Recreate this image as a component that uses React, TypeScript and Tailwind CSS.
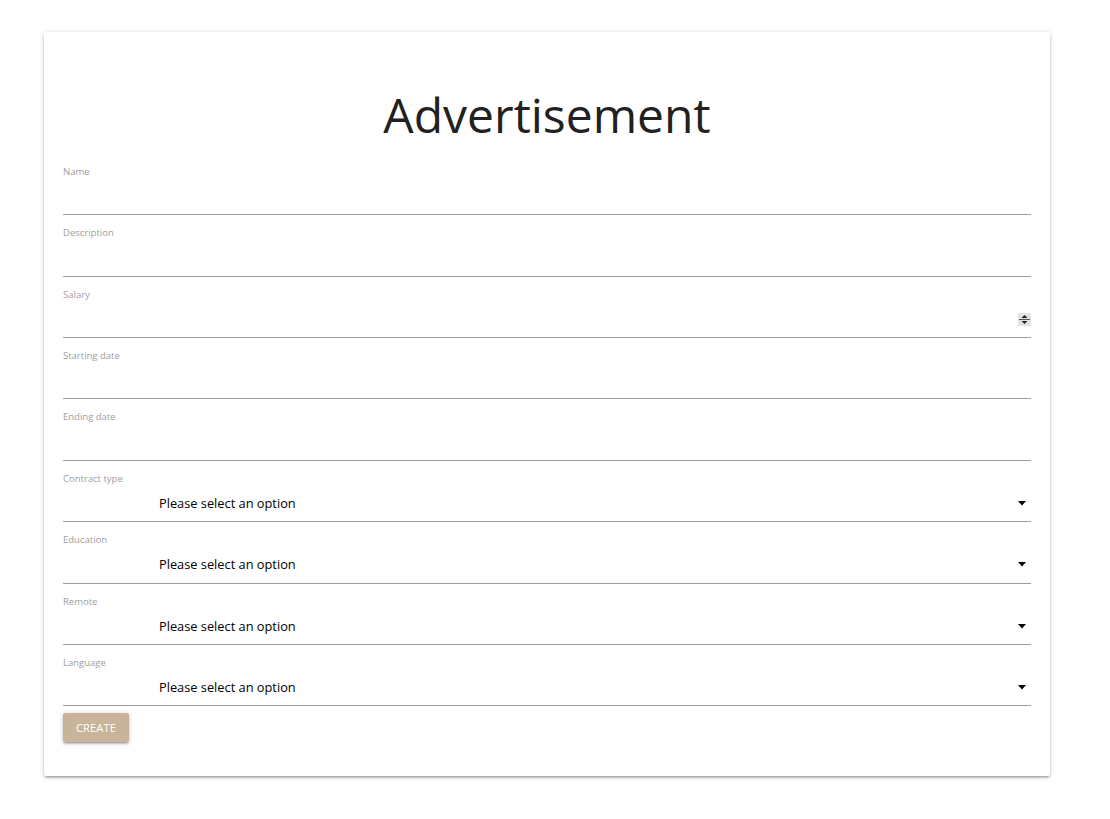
import React from "react";

const font = { fontFamily: '"Open Sans", "Noto Sans", sans-serif' };

function Caret() {
  return (
    <svg width="8" height="5" viewBox="0 0 8 5" className="absolute right-[5px] top-[40px]">
      <path d="M0 0 L8 0 L4 4.5 Z" fill="#000" />
    </svg>
  );
}

function Spinner() {
  return (
    <div className="absolute right-0 top-[36px] flex h-[13px] w-[13px] flex-col bg-[#e3e3e3]">
      <svg width="13" height="13" viewBox="0 0 13 13">
        <path d="M3.5 5 L9.5 5 L6.5 2 Z" fill="#222" />
        <rect x="1" y="6" width="11" height="1" fill="#555" />
        <path d="M3.5 8 L9.5 8 L6.5 11 Z" fill="#222" />
      </svg>
    </div>
  );
}

function Field({ label, kind }: { label: string; kind?: "select" | "number" }) {
  return (
    <div className="relative h-[61.4px] border-b border-[#9e9e9e] pt-[13px]">
      <div className="text-[9.5px] leading-[10px] text-[#9e9e9e]">{label}</div>
      {kind === "select" && (
        <>
          <div className="absolute left-[96px] top-[32px] text-[12.8px] leading-[20px] text-black">
            Please select an option
          </div>
          <Caret />
        </>
      )}
      {kind === "number" && <Spinner />}
    </div>
  );
}

export default function App() {
  return (
    <div className="min-h-[819px] w-[1110px] bg-white pt-[32px]" style={font}>
      <div className="ml-[44px] w-[1006px] rounded-[2px] bg-white px-[19px] pb-[34px] shadow-[0_2px_2px_0_rgba(0,0,0,0.14),0_3px_1px_-2px_rgba(0,0,0,0.12),0_1px_5px_0_rgba(0,0,0,0.2)]">
        <div className="flex h-[121.8px] items-start justify-center pt-[53px]">
          <h1 className="text-[48px] font-normal leading-[60px] text-[#212121]">Advertisement</h1>
        </div>
        <Field label="Name" />
        <Field label="Description" />
        <Field label="Salary" kind="number" />
        <Field label="Starting date" />
        <Field label="Ending date" />
        <Field label="Contract type" kind="select" />
        <Field label="Education" kind="select" />
        <Field label="Remote" kind="select" />
        <Field label="Language" kind="select" />
        <button className="mt-[7px] h-[29px] w-[66px] rounded-[2px] bg-[#c9b499] text-[11px] tracking-[0.2px] text-white shadow-[0_2px_2px_0_rgba(0,0,0,0.14),0_3px_1px_-2px_rgba(0,0,0,0.12),0_1px_5px_0_rgba(0,0,0,0.2)]">
          CREATE
        </button>
      </div>
    </div>
  );
}
